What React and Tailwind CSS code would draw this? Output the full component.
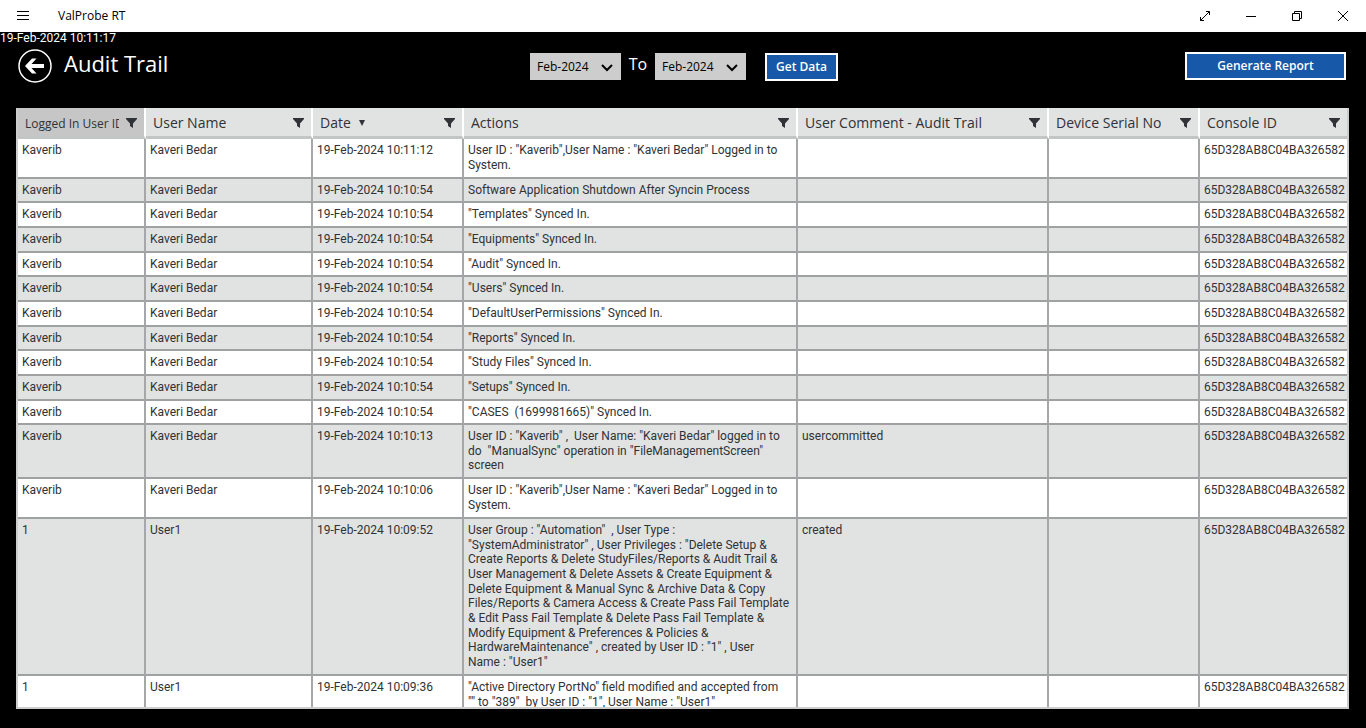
import React from "react";

const single = (text) => ({ actions: [text], time: "10:10:54" });

const rows = [
  { time: "10:11:12", actions: ['User ID : "Kaverib",User Name : "Kaveri Bedar" Logged in to', "System."] },
  single("Software Application Shutdown After Syncin Process"),
  single('"Templates" Synced In.'),
  single('"Equipments" Synced In.'),
  single('"Audit" Synced In.'),
  single('"Users" Synced In.'),
  single('"DefaultUserPermissions" Synced In.'),
  single('"Reports" Synced In.'),
  single('"Study Files" Synced In.'),
  single('"Setups" Synced In.'),
  single('"CASES  (1699981665)" Synced In.'),
  {
    time: "10:10:13",
    comment: "usercommitted",
    actions: [
      'User ID : "Kaverib" ,  User Name: "Kaveri Bedar" logged in to',
      'do  "ManualSync" operation in "FileManagementScreen"',
      "screen",
    ],
  },
  { time: "10:10:06", actions: ['User ID : "Kaverib",User Name : "Kaveri Bedar" Logged in to', "System."] },
  {
    id: "1",
    name: "User1",
    time: "10:09:52",
    comment: "created",
    actions: [
      'User Group : "Automation"  , User Type :',
      '"SystemAdministrator" , User Privileges : "Delete Setup &',
      "Create Reports & Delete StudyFiles/Reports & Audit Trail &",
      "User Management & Delete Assets & Create Equipment &",
      "Delete Equipment & Manual Sync & Archive Data & Copy",
      "Files/Reports & Camera Access & Create Pass Fail Template",
      "& Edit Pass Fail Template & Delete Pass Fail Template &",
      "Modify Equipment & Preferences & Policies &",
      'HardwareMaintenance" , created by User ID : "1" , User',
      'Name : "User1"',
    ],
  },
  {
    id: "1",
    name: "User1",
    time: "10:09:36",
    actions: [
      '"Active Directory PortNo" field modified and accepted from',
      '"" to "389"  by User ID : "1", User Name : "User1"',
    ],
  },
];

const columns = [
  { label: "Logged In User ID", width: "w-[128px]", selected: true },
  { label: "User Name", width: "w-[167px]" },
  { label: "Date", width: "w-[151px]", sorted: true },
  { label: "Actions", width: "w-[334px]" },
  { label: "User Comment - Audit Trail", width: "w-[251px]" },
  { label: "Device Serial No", width: "w-[151px]" },
  { label: "Console ID", width: "w-[147px]" },
];

function FilterIcon() {
  return (
    <svg width="11" height="10" viewBox="0 0 11 10" fill="#2f3236" aria-hidden="true">
      <path d="M0 0h11v1L7 5.500V10L4 8V5.500L0 1z" />
    </svg>
  );
}

function WindowButton({ label, children }) {
  return (
    <button aria-label={label} className="flex h-8 w-[46px] items-center justify-center">
      <svg width="12" height="12" viewBox="0 0 12 12" fill="none" stroke="#000" aria-hidden="true">
        {children}
      </svg>
    </button>
  );
}

function MonthSelect({ label }) {
  return (
    <div className="relative">
      <select
        aria-label={label}
        defaultValue="Feb-2024"
        className="block h-[27px] w-[91px] appearance-none bg-[#cdcdcd] pl-[7px] text-[12px] text-black"
      >
        <option>Jan-2024</option>
        <option>Feb-2024</option>
      </select>
      <svg
        className="pointer-events-none absolute top-[11px] right-2"
        width="12" height="8" viewBox="0 0 12 8" fill="none" stroke="#000" strokeWidth="2" aria-hidden="true"
      >
        <path d="M1 1l5 5 5-5" />
      </svg>
    </div>
  );
}

function HeaderCell({ column }) {
  return (
    <th
      scope="col"
      className={`${column.width} h-[31px] border-r-2 border-b-3 border-r-white border-b-[#c3c4c4] p-0 font-normal last:border-r-0 ${
        column.selected ? "bg-[#c6c6c6]" : "bg-[#e1e3e2]"
      }`}
    >
      <div className="flex items-center px-[7px] pt-0.5">
        <span
          className={`min-w-0 overflow-hidden leading-5 whitespace-nowrap ${
            column.selected ? "w-[94px] pt-0.5 text-[12px]" : "text-[14px]"
          }`}
        >
          {column.label}
        </span>
        {column.sorted && (
          <svg className="ml-2 shrink-0" width="6" height="6" viewBox="0 0 6 6" fill="#2f3236" aria-hidden="true">
            <path d="M0 0h6L3 6z" />
          </svg>
        )}
        <button aria-label={`Filter ${column.label}`} className="ml-auto shrink-0">
          <FilterIcon />
        </button>
      </div>
    </th>
  );
}

const cell = "border-r-2 border-b-2 border-r-[#a6a7a8] border-b-[#a0a1a2] px-1 pt-1 pb-0 align-top last:border-r-0";

export default function App() {
  return (
    <div className="flex h-screen flex-col overflow-hidden bg-black font-['Open_Sans','Noto_Sans',sans-serif] text-[12px] text-white">
      <header className="flex h-8 shrink-0 items-center bg-white text-black">
        <WindowButton label="Menu">
          <path d="M0 1.500h12M0 5.500h12M0 9.500h12" />
        </WindowButton>
        <span className="pl-3">ValProbe RT</span>
        <div className="ml-auto flex">
          <WindowButton label="Full screen">
            <path d="M1.500 10.500l9-9M7 1.500h3.500V5M1.500 7v3.500H5" />
          </WindowButton>
          <WindowButton label="Minimize">
            <path d="M1 6.500h10" />
          </WindowButton>
          <WindowButton label="Restore">
            <path d="M1.500 3.500h7v7h-7zM3.500 3.500v-2h7v7h-2" />
          </WindowButton>
          <WindowButton label="Close">
            <path d="M1 1l10 10M11 1L1 11" />
          </WindowButton>
        </div>
      </header>

      <div className="h-3 shrink-0 font-[Roboto,sans-serif] leading-3">19-Feb-2024 10:11:17</div>

      <div className="flex h-16 shrink-0 items-start pt-[5px] pr-5 pl-[18px]">
        <div className="flex w-[512px] items-start gap-3">
          <button aria-label="Back">
            <svg width="34" height="34" viewBox="0 0 34 34" fill="none" aria-hidden="true">
              <circle cx="17" cy="17" r="16" stroke="#fff" strokeWidth="1.500" />
              <path d="M14 9.500h4.500L13.500 15H26v4H13.500l5 5.500H14L7 17z" fill="#fff" />
            </svg>
          </button>
          <h1 className="text-[22px] leading-7">Audit Trail</h1>
        </div>
        <div className="flex items-start pt-1">
          <MonthSelect label="From month" />
          <span className="w-[34px] text-center text-[16px] leading-[22px]">To</span>
          <MonthSelect label="To month" />
          <button className="ml-[19px] h-7 w-[73px] border-2 border-white bg-[#1858a8] font-semibold">Get Data</button>
        </div>
        <button className="mt-[3px] ml-auto h-7 w-[161px] border-2 border-white bg-[#1858a8] font-semibold">
          Generate Report
        </button>
      </div>

      <main className="mr-[17px] mb-[19px] ml-4 min-h-0 flex-1 overflow-hidden border-2 border-t-0 border-[#cdcdcd] bg-white text-[#2f3236]">
        <table className="w-full table-fixed border-separate border-spacing-0 text-left">
          <thead>
            <tr>
              {columns.map((column) => (
                <HeaderCell key={column.label} column={column} />
              ))}
            </tr>
          </thead>
          <tbody className="font-[Roboto,sans-serif]">
            {rows.map((row, i) => (
              <tr
                key={i}
                className={`leading-[15px] whitespace-pre even:bg-[#e1e3e2] ${
                  row.actions.length > 1 ? "h-10" : "h-[25px] [&:nth-child(3n+2)]:h-6"
                }`}
              >
                <td className={cell}>{row.id ?? "Kaverib"}</td>
                <td className={cell}>{row.name ?? "Kaveri Bedar"}</td>
                <td className={cell}>19-Feb-2024 {row.time}</td>
                <td className={cell}>
                  <div className={row.actions.length > 1 ? "pb-1" : ""}>
                    {row.actions.map((line, j) => (
                      <div key={j} className="[&:nth-child(3n+2)]:leading-[14px]">{line}</div>
                    ))}
                  </div>
                </td>
                <td className={cell}>{row.comment}</td>
                <td className={cell}></td>
                <td className={cell}>65D328AB8C04BA326582</td>
              </tr>
            ))}
          </tbody>
        </table>
      </main>
    </div>
  );
}
